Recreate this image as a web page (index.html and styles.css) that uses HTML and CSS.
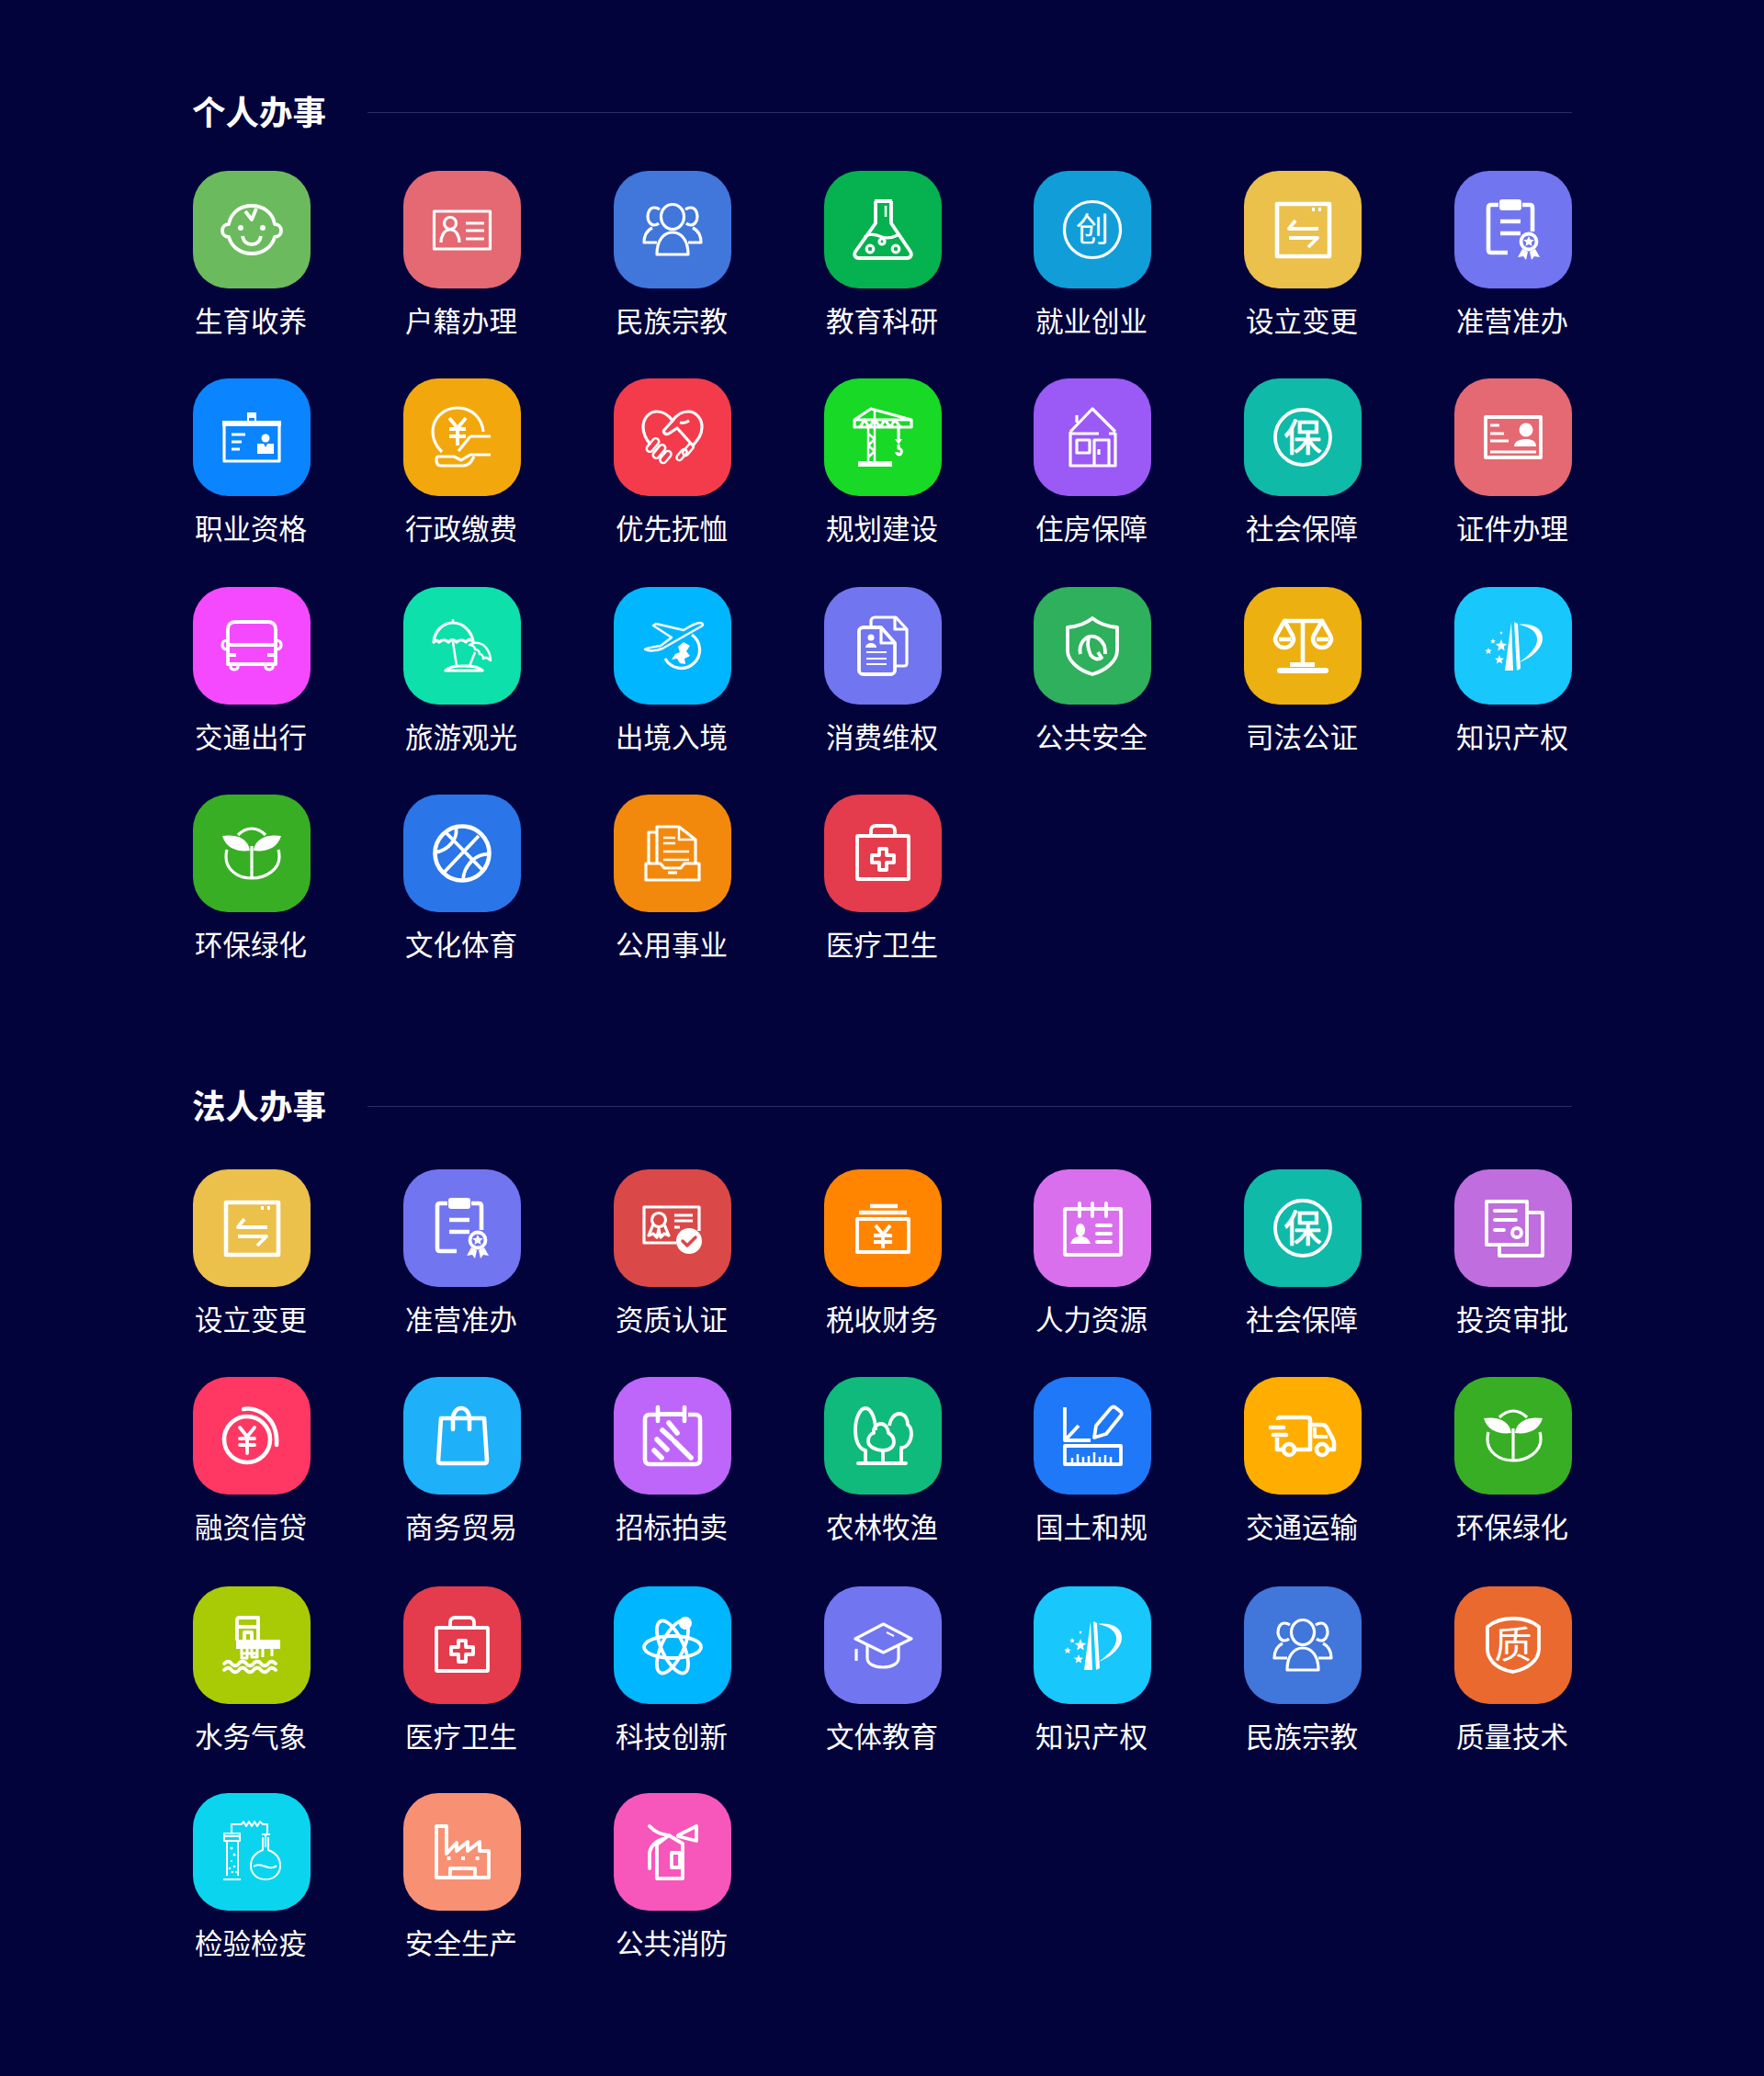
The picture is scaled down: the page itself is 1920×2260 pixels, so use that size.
FILE: index.html
```html
<!DOCTYPE html>
<html lang="zh-CN">
<head>
<meta charset="utf-8">
<title>办事分类</title>
<link rel="stylesheet" href="styles.css">
</head>
<body>
<svg class="sprite" xmlns="http://www.w3.org/2000/svg" aria-hidden="true">
<defs>
<symbol id="baby" viewBox="0 0 128 128"><path class="w4" d="M64 38c-13 0-23 8-25 20-4 0-7 3-7 7s3 7 7 7c3 11 13 18 25 18s22-7 25-18c4 0 7-3 7-7s-3-7-7-7C87 46 77 38 64 38z"/><path class="w4" d="M57 44l7 9 5-12"/><circle class="f n" cx="52" cy="62" r="3"/><circle class="f n" cx="76" cy="62" r="3"/><path class="w4" d="M54 71c1 6 5 9 10 9s9-3 10-9"/></symbol>
<symbol id="idcard" viewBox="0 0 128 128"><rect x="33.500" y="44" width="61" height="41"/><circle cx="51" cy="57" r="6.500"/><path d="M41 78c0-8 4-14 10-14s10 6 10 14"/><path d="M68 57h20M68 65h20M68 74h20"/></symbol>
<symbol id="people" viewBox="0 0 128 128"><ellipse cx="64" cy="50" rx="12.500" ry="13.500"/><path d="M47 91c0-15 7-24 17-24s17 9 17 24z"/><path d="M50 42c-2-1.500-4-2-6-2-4 0-7 4-7 9.500s3 9.500 7 9.500c2 0 4-1 5-2M78 42c2-1.500 4-2 6-2 4 0 7 4 7 9.500s-3 9.500-7 9.500c-2 0-4-1-5-2"/><path d="M42 62c-6 3-9 9-9 16h14M86 62c6 3 9 9 9 16H81"/></symbol>
<symbol id="flask" viewBox="0 0 128 128"><path class="w4" d="M55 33h19M56 33v24L34 88c-2 4 0 7 4 7h52c4 0 6-3 4-7L73 57V33"/><path d="M44 72c7-5 13-2 19 0s11 1 17-2"/><path class="w25" d="M67 38v12"/><circle cx="50" cy="85" r="3.800"/><circle cx="63" cy="77" r="3"/><circle cx="78" cy="85" r="3.800"/></symbol>
<symbol id="chuang" viewBox="0 0 128 128"><circle cx="64" cy="64" r="30.500"/><text class="t" x="64" y="77" font-size="36" text-anchor="middle">创</text></symbol>
<symbol id="change" viewBox="0 0 128 128"><rect class="w5" x="36" y="36" width="57" height="57"/><path class="w4" d="M74 42h3M81 42h3M81 63H49l7-9M49 73h31l-10 10"/></symbol>
<symbol id="permit" viewBox="0 0 128 128"><path class="w5" d="M48 37h-8c-2 0-3 1-3 3v46c0 2 1 3 3 3h18M74 37h8c2 0 3 1 3 3v26"/><rect class="f n" x="49" y="31" width="24" height="12" rx="3"/><path class="w5" d="M50 55h22M50 68h22"/><circle class="w4" cx="81" cy="77" r="8.500"/><path class="f n" d="M81 71l1.700 3.800 4.100.4-3.100 2.700.9 4-3.600-2.100-3.600 2.100.9-4-3.100-2.700 4.100-.4z"/><path class="f n" d="M74 85l-5 9 6-1 3 4 2-9zM88 85l5 9-6-1-3 4-2-9z"/></symbol>
<symbol id="badge" viewBox="0 0 128 128"><path d="M34 48h60v42H34z"/><path class="f n" d="M32 46h64v6H32zM59 37h10v13H59z"/><path class="f-bg" d="M61 43h6v3h-6z"/><path d="M42 61h15M42 69h11M42 77h9"/><circle class="f n" cx="79" cy="65" r="4.500"/><path class="f n" d="M70 71h7l2 4 2-4h7v11H70z"/></symbol>
<symbol id="yuan-hand" viewBox="0 0 128 128"><path d="M42 80c-6-6-10-14-10-22 0-15 12-26 27-26s27 11 28 26"/><path class="w4" d="M50 43l9 11 9-11M59 54v19M50 55h18M50 63h18"/><path d="M73 63h22M73 63L60 79M38 85h17l8 4v0l10-6h22M38 85c-2 0-2 2-2 4 0 3 1 6 5 6h24c4 0 7-2 9-5l3-5"/></symbol>
<symbol id="handshake" viewBox="0 0 128 128"><path d="M40 72c-5-6-8-11-8-19 0-10 7-17 15-17 7 0 12 3 17 10 5-7 10-10 17-10 8 0 15 7 15 17 0 8-4 13-9 19"/><path d="M64 46l-9 10c-2 3 2 6 5 4l9-6 18 20M72 48c4 1 7 0 10-2"/><g class="w25"><rect x="39" y="64" width="7" height="17" rx="3.500" transform="rotate(40 42.500 72.500)"/><rect x="46" y="71" width="7" height="17" rx="3.500" transform="rotate(40 49.500 79.500)"/><rect x="53" y="78" width="7" height="15" rx="3.500" transform="rotate(40 56.500 85.500)"/><rect x="78" y="70" width="6" height="15" rx="3" transform="rotate(40 81 77.500)"/><rect x="71" y="76" width="6" height="14" rx="3" transform="rotate(40 74 83)"/></g></symbol>
<symbol id="crane" viewBox="0 0 128 128"><path d="M33 45h62v8H33zM33 45l18-12 44 12M39 53l5-8 5 8 6-8 6 8 5-8 6 8 5-8 6 8"/><path class="w25" d="M48 53v38M55 35v56M48 60l7 6-7 7 7 6-7 7"/><path class="f n" d="M37 90h37v6H37z"/><path d="M81 53v14"/><path class="f n" d="M77 66h8l-4 6z"/><path d="M81 72v4c3 1 4 3 3 5-1 3-5 2-5-1"/></symbol>
<symbol id="house" viewBox="0 0 128 128"><path d="M47 48V40M40 58l24-25 25 25M40 58v37h49V59M40 60h31M82 60h7"/><rect x="47" y="67" width="14" height="14"/><path d="M66 95V67h16v28M71 77v6"/></symbol>
<symbol id="bao" viewBox="0 0 128 128"><circle cx="64" cy="64" r="30" class="w4"/><text class="t tb" x="64" y="79" font-size="41" text-anchor="middle">保</text></symbol>
<symbol id="pcard" viewBox="0 0 128 128"><rect class="w4" x="34" y="42" width="60" height="44"/><path d="M39 51h10M39 60h15M39 68h20M39 80h50"/><circle class="f n" cx="78" cy="56" r="7.500"/><path class="f n" d="M65 74c0-6 7-8 13-8s11 2 11 8z"/></symbol>
<symbol id="bus" viewBox="0 0 128 128"><path class="w4" d="M38 84V46c0-5 3-8 8-8h36c5 0 8 3 8 8v38z"/><path class="w4" d="M38 63h52M38 74h9M81 74h9"/><path d="M38 58c-4 0-6 2-6 5s2 5 6 5M90 58c4 0 6 2 6 5s-2 5-6 5"/><path d="M41 84v3c0 2 2 3 4 3s4-1 4-3v-3M79 84v3c0 2 2 3 4 3s4-1 4-3v-3"/></symbol>
<symbol id="beach" viewBox="0 0 128 128"><path d="M33 60c1-12 10-21 21-21s20 9 22 20c-3-2-6-2-8 1-3-3-7-3-10 0-3-3-6-3-9 0-3-3-7-3-10 0-2-2-4-2-6 0z" /><path class="w25" d="M54 35v4M54 60l4 26M72 63c7-4 14-2 18 3 3 4 5 9 5 14-3-3-6-4-8-2 0-3-2-5-4-5 0-3-2-5-5-5 0-3-3-5-6-5zM78 71l-6 15"/><path d="M46 91c4-4 9-5 20-5s16 1 20 5z"/></symbol>
<symbol id="plane" viewBox="0 0 128 128"><path class="w25" d="M94 39c-4 0-10 3-18 8L46 40l-3 2 20 13-12 9c-5 1-14 2-17 4 4 2 12 2 19-1l42-24c3-1 2-4-1-4z"/><path d="M56 78A20 20 0 1 0 85 52"/><path class="f n" d="M76 60l7 4-4 6 4 5-6 3 1 6-6-1-3-5-6 1 4-6 5-2-2-6z"/></symbol>
<symbol id="files" viewBox="0 0 128 128"><path d="M51 43v-6c0-2 2-4 4-4h23l12 13v37c0 2-1 3-3 3h-9"/><path d="M77 33v13h13"/><path class="w4" d="M43 44h19l15 17v30c0 2-2 4-4 4H43c-3 0-5-2-5-4V48c0-2 2-4 5-4z"/><path d="M62 45v16h15"/><circle class="f n" cx="51" cy="55" r="3.500"/><path class="f n" d="M45 66c0-3 3-5 6-5s6 2 6 5z"/><path d="M46 71h22M46 78h22M46 84h22" class="w2"/></symbol>
<symbol id="shield" viewBox="0 0 128 128"><path class="w4" d="M64 34c-7 6-17 9-27 10v25c0 12 13 22 27 26 14-4 27-14 27-26V44c-10-1-20-4-27-10z"/><path class="w4" d="M51 73c-2-8 2-16 9-19 7-2 14 3 17 10 1 3 1 6 1 9M61 53c-3 6-2 14 1 21 3 4 8 6 12 3M70 71l4 6-6 2"/></symbol>
<symbol id="scale" viewBox="0 0 128 128"><path class="w5" d="M44 37h42M64 37v48"/><path class="f n" d="M50 82h27v5H50zM39 88h50a2.500 2.500 0 0 1 0 6H39a2.500 2.500 0 0 1 0-6z"/><path class="w5" d="M44 37L35 53c-3 6 2 13 9 13s12-7 9-13zM85 37l-9 16c-3 6 2 13 9 13s12-7 9-13z"/><path class="w5" d="M38 57h13M79 57h13"/></symbol>
<symbol id="ip" viewBox="0 0 128 128"><path class="f n" d="M62 38l-7 53h9zM65 38l3 53 4-2-3-49z"/><path class="f n" d="M70 41c13-2 26 3 26 15 0 10-11 21-25 26 9-7 20-16 19-26-1-9-10-13-20-15z"/><path class="f n" d="M51 57l1.700 4.500 4.500.4-3.500 3 1.100 4.600-3.800-2.500-3.800 2.500 1.100-4.600-3.500-3 4.500-.4zM37 66l1 2.500 2.700.2-2 1.700.7 2.600-2.400-1.400-2.400 1.400.7-2.600-2-1.700 2.700-.2zM49 74l1.400 3.400 3.600.3-2.700 2.300.8 3.600-3.100-2-3.100 2 .8-3.600-2.700-2.300 3.600-.3zM42 56l.8 2 2 .2-1.500 1.300.5 2-1.800-1-1.800 1 .5-2-1.500-1.300 2-.2zM51 48l.5 1.300 1.300.1-1 .9.3 1.300-1.100-.7-1.100.7.3-1.300-1-.9 1.300-.1z"/></symbol>
<symbol id="sprout" viewBox="0 0 128 128"><path d="M49 44c5-5 10-7 15-7s10 2 15 7M37 60c-1 3-1 6-1 8 0 13 12 23 28 23s30-10 30-23c0-3 0-5-1-8M64 56v35"/><path class="f n" d="M32 45c12-2 28 1 30 16-12 2-26-2-30-16zM96 45c-12-2-28 1-30 16 12 2 26-2 30-16z"/></symbol>
<symbol id="ball" viewBox="0 0 128 128"><circle class="w5" cx="64" cy="64" r="29.500"/><path class="w4" d="M82 45L43 86M46 41l42 43M57 35c3 12-7 26-23 28M93 65c-13-1-27 11-28 28"/></symbol>
<symbol id="tray" viewBox="0 0 128 128"><path d="M47 41h-9v33M47 74V35h24l18 14v25"/><path d="M71 35v14h18M54 47h13M54 53h13M54 62h28M54 71h28" class="w25"/><path d="M35 75h16l4 5h18l4-5h16v18H35z"/><path d="M59 85h10"/></symbol>
<symbol id="medkit" viewBox="0 0 128 128"><rect class="w4" x="36" y="45" width="56" height="47" rx="1"/><path class="w4" d="M51 45v-6c0-3 2-5 5-5h16c3 0 5 2 5 5v6"/><path class="w4" d="M60 59h8v7h8v8h-8v8h-8v-8h-8v-8h8z"/></symbol>
<symbol id="cert" viewBox="0 0 128 128"><path d="M68 80H33V41h60v26"/><circle cx="49" cy="55" r="7.500"/><path d="M43 60l-5 12 5-2 4 4 2-9 2 9 4-4 5 2-5-12"/><path d="M66 50h20M66 56h20M66 63h6"/><circle class="f n" cx="82" cy="78" r="14"/><path class="ck" d="M75 78l5 5 9-9"/></symbol>
<symbol id="tax" viewBox="0 0 128 128"><path class="w5" d="M50 40h30M38 47h52"/><rect class="w4" x="36" y="54" width="56" height="36"/><path class="w4" d="M56 61l8 10 8-10M64 71v15M54 72h20M54 79h20"/></symbol>
<symbol id="hr" viewBox="0 0 128 128"><rect class="w4" x="34" y="43" width="61" height="50" rx="1"/><path class="w4 r" d="M50 37v14M64 37v14M79 37v14M69 61h15M69 70h15M69 79h15"/><ellipse class="f n" cx="51" cy="66" rx="5" ry="7"/><path class="f n" d="M40 81c2-6 6-8 11-8s9 2 11 8z"/></symbol>
<symbol id="invest" viewBox="0 0 128 128"><path class="w4" d="M35 35h44v47H35zM80 47h16v47H49V82"/><path class="w4 r" d="M44 45h23M44 55h23M44 66h10"/><circle class="w4" cx="68" cy="69" r="5"/></symbol>
<symbol id="coin" viewBox="0 0 128 128"><circle class="w5" cx="59" cy="68" r="25"/><path class="w5 r" d="M55 35c14-3 38 8 36 39"/><path class="w4 r" d="M51 55l8 10 8-10M59 65v18M51 67h16M51 74h16"/></symbol>
<symbol id="bag" viewBox="0 0 128 128"><path class="w5" d="M41 45h47l3 46c0 2-1 3-3 3H41c-2 0-3-1-3-3z"/><path class="w5 r" d="M54 57V46c0-7 4-12 9-12s9 5 9 12v11"/></symbol>
<symbol id="auction" viewBox="0 0 128 128"><path class="w5" d="M47 41h-8c-3 0-5 2-5 5v44c0 3 2 5 5 5h50c3 0 5-2 5-5V46c0-3-2-5-5-5h-8"/><path class="w5 r" d="M48 33v15M77 33v15"/><path class="f n" d="M48 38h29v5H48z"/><path class="w6 r" d="M60 50l9 11M53 58l10 9M47 68l11 11M44 80l8 8M66 70l18 18"/></symbol>
<symbol id="trees" viewBox="0 0 128 128"><path class="w4" d="M45 80C37 78 34 68 34 58c0-13 5-24 11-24s11 11 11 24"/><path class="w4" d="M71 53c1-7 5-13 11-13 6 0 9 6 9 12 3 2 4 6 4 10 0 8-5 15-11 15"/><path class="w4" d="M62 51c5 0 8 6 8 10 4 2 6 6 6 10 0 5-5 9-12 9s-16-4-16-10c0-4 2-8 6-9-1-5 3-10 8-10z"/><path class="w4 r" d="M37 94h52M45 80v14M64 80v14M84 77v17"/></symbol>
<symbol id="land" viewBox="0 0 128 128"><path class="w4" d="M34 33v36h28M36 67l13-14"/><path class="w4" d="M84 34c2-2 4-2 6 0l5 4c1 1 1 3 0 4L79 62l-13 4 2-13z"/><rect class="w4" x="34" y="75" width="61" height="20"/><path class="w25" d="M42 94v-6M48 94v-10M54 94v-7M60 94v-8M66 94v-12M72 94v-7M78 94v-9M84 94v-7"/></symbol>
<symbol id="truck" viewBox="0 0 128 128"><path class="w5" d="M37 47c0-2 1-3 3-3h29c2 0 3 1 3 3v32H56M36 66v13h6M72 52h13c2 0 4 1 5 3l6 11c1 2 2 4 2 6v7h-6"/><path class="w4" d="M77 55v10h14"/><path class="w5 r" d="M29 55h14M32 63h14"/><circle class="w5" cx="49" cy="79" r="6"/><circle class="w5" cx="85" cy="79" r="6"/></symbol>
<symbol id="water" viewBox="0 0 128 128"><path class="w4" d="M48 59V37c0-2 1-3 3-3h20v24"/><path class="w4" d="M48 44h24M56 60V50h8v10"/><path class="f n" d="M47 58h48v10H47z"/><path class="w3 b" d="M53 68v10h6V68M64 68v9h6V68M76 68v9M86 68v8M53 73h17"/><path class="w4 r" d="M34 84c3-3 6-3 8 0s6 3 8 0 6-3 8 0 6 3 8 0 6-3 8 0 6 3 8 0 5-3 8 0M34 91c3-3 6-3 8 0s6 3 8 0 6-3 8 0 6 3 8 0 6-3 8 0 6 3 8 0 5-3 8 0"/></symbol>
<symbol id="atom" viewBox="0 0 128 128"><g class="w4"><ellipse cx="64" cy="66" rx="31" ry="12"/><ellipse cx="64" cy="66" rx="31" ry="12" transform="rotate(65 64 66)"/><ellipse cx="64" cy="66" rx="31" ry="12" transform="rotate(-65 64 66)"/></g><circle class="f n" cx="78" cy="40" r="7"/></symbol>
<symbol id="grad" viewBox="0 0 128 128"><path d="M64.500 41L95 57 64.500 72 34 57z"/><path d="M47 64v14c0 6 7 10 17 10s17-4 17-10V64M35 68v13"/><path class="w2" d="M68 50l8 4"/></symbol>
<symbol id="zhi" viewBox="0 0 128 128"><path class="w4" d="M36 44c7-6 17-9 28-9s21 3 28 9v24c0 13-13 22-28 25-9-1-20-6-24-13-3-4-4-8-4-12z"/><text class="t" x="64" y="78" font-size="41" text-anchor="middle">质</text></symbol>
<symbol id="lab" viewBox="0 0 128 128"><g class="w2"><path d="M42 44V34h11l2-3 3 5 3-5 3 5 3-5 3 5 3-5 3 3h5v12"/><path d="M37 52v38M49 52v38M33 94h19M34 44h17v8H34zM34 47h17M75 45h9M79 45v14M76 48v14c-8 3-13 9-13 17 0 9 7 15 16 15s16-6 16-15c0-8-5-14-13-17V48M66 80c4-3 8-2 13 0s9 2 12-1"/></g><circle class="f n" cx="42" cy="60" r="1.500"/><circle class="f n" cx="45" cy="67" r="1.500"/><circle class="f n" cx="42" cy="74" r="1"/><circle class="f n" cx="40" cy="82" r="1.300"/><circle class="f n" cx="45" cy="80" r="1.300"/><circle class="f n" cx="43" cy="86" r="1.300"/><circle class="f n" cx="47" cy="86" r="1"/></symbol>
<symbol id="factory" viewBox="0 0 128 128"><path class="w4" d="M36 92V36h11v30l11-12v9l12-10v10l13-10v10h10v29z"/><path class="w4" d="M51 92V82h27v10"/><path class="w4 d" d="M49.500 71h.1M65 71h.1M80.500 71h.1"/></symbol>
<symbol id="fire" viewBox="0 0 128 128"><path class="w4" d="M47 56l13-10 15 9v38H47z"/><rect class="w4" x="63" y="65" width="9" height="16"/><path class="w4 r" d="M70 46l20-10v16L70 47M60 46c-6-1-14-2-21-10M53 50c-7 2-13 8-14 15v17"/></symbol>
</defs>
</svg>

<main class="page">
  <section class="block block-personal">
    <header class="block-head"><h2>个人办事</h2><span class="rule"></span></header>
    <div class="tiles">
      <a class="tile"><span class="ico tone-leaf"><svg><use href="#baby"/></svg></span><span class="name">生育收养</span></a>
      <a class="tile"><span class="ico tone-rose"><svg><use href="#idcard"/></svg></span><span class="name">户籍办理</span></a>
      <a class="tile"><span class="ico tone-blue"><svg><use href="#people"/></svg></span><span class="name">民族宗教</span></a>
      <a class="tile"><span class="ico tone-emerald"><svg><use href="#flask"/></svg></span><span class="name">教育科研</span></a>
      <a class="tile"><span class="ico tone-ocean"><svg><use href="#chuang"/></svg></span><span class="name">就业创业</span></a>
      <a class="tile"><span class="ico tone-sand"><svg><use href="#change"/></svg></span><span class="name">设立变更</span></a>
      <a class="tile"><span class="ico tone-iris"><svg><use href="#permit"/></svg></span><span class="name">准营准办</span></a>

      <a class="tile"><span class="ico tone-azure"><svg><use href="#badge"/></svg></span><span class="name">职业资格</span></a>
      <a class="tile"><span class="ico tone-amber"><svg><use href="#yuan-hand"/></svg></span><span class="name">行政缴费</span></a>
      <a class="tile"><span class="ico tone-red"><svg><use href="#handshake"/></svg></span><span class="name">优先抚恤</span></a>
      <a class="tile"><span class="ico tone-lime"><svg><use href="#crane"/></svg></span><span class="name">规划建设</span></a>
      <a class="tile"><span class="ico tone-violet"><svg><use href="#house"/></svg></span><span class="name">住房保障</span></a>
      <a class="tile"><span class="ico tone-teal"><svg><use href="#bao"/></svg></span><span class="name">社会保障</span></a>
      <a class="tile"><span class="ico tone-rose"><svg><use href="#pcard"/></svg></span><span class="name">证件办理</span></a>

      <a class="tile"><span class="ico tone-magenta"><svg><use href="#bus"/></svg></span><span class="name">交通出行</span></a>
      <a class="tile"><span class="ico tone-mint"><svg><use href="#beach"/></svg></span><span class="name">旅游观光</span></a>
      <a class="tile"><span class="ico tone-sky"><svg><use href="#plane"/></svg></span><span class="name">出境入境</span></a>
      <a class="tile"><span class="ico tone-iris"><svg><use href="#files"/></svg></span><span class="name">消费维权</span></a>
      <a class="tile"><span class="ico tone-grass"><svg><use href="#shield"/></svg></span><span class="name">公共安全</span></a>
      <a class="tile"><span class="ico tone-gold"><svg><use href="#scale"/></svg></span><span class="name">司法公证</span></a>
      <a class="tile"><span class="ico tone-cyan"><svg><use href="#ip"/></svg></span><span class="name">知识产权</span></a>

      <a class="tile"><span class="ico tone-forest"><svg><use href="#sprout"/></svg></span><span class="name">环保绿化</span></a>
      <a class="tile"><span class="ico tone-royal"><svg><use href="#ball"/></svg></span><span class="name">文化体育</span></a>
      <a class="tile"><span class="ico tone-tangerine"><svg><use href="#tray"/></svg></span><span class="name">公用事业</span></a>
      <a class="tile"><span class="ico tone-crimson"><svg><use href="#medkit"/></svg></span><span class="name">医疗卫生</span></a>
    </div>
  </section>

  <section class="block block-corporate">
    <header class="block-head"><h2>法人办事</h2><span class="rule"></span></header>
    <div class="tiles">
      <a class="tile"><span class="ico tone-sand"><svg><use href="#change"/></svg></span><span class="name">设立变更</span></a>
      <a class="tile"><span class="ico tone-iris"><svg><use href="#permit"/></svg></span><span class="name">准营准办</span></a>
      <a class="tile"><span class="ico tone-brick"><svg><use href="#cert"/></svg></span><span class="name">资质认证</span></a>
      <a class="tile"><span class="ico tone-orange"><svg><use href="#tax"/></svg></span><span class="name">税收财务</span></a>
      <a class="tile"><span class="ico tone-orchid"><svg><use href="#hr"/></svg></span><span class="name">人力资源</span></a>
      <a class="tile"><span class="ico tone-teal"><svg><use href="#bao"/></svg></span><span class="name">社会保障</span></a>
      <a class="tile"><span class="ico tone-plum"><svg><use href="#invest"/></svg></span><span class="name">投资审批</span></a>

      <a class="tile"><span class="ico tone-pink"><svg><use href="#coin"/></svg></span><span class="name">融资信贷</span></a>
      <a class="tile"><span class="ico tone-sky2"><svg><use href="#bag"/></svg></span><span class="name">商务贸易</span></a>
      <a class="tile"><span class="ico tone-lilac"><svg><use href="#auction"/></svg></span><span class="name">招标拍卖</span></a>
      <a class="tile"><span class="ico tone-jade"><svg><use href="#trees"/></svg></span><span class="name">农林牧渔</span></a>
      <a class="tile"><span class="ico tone-cobalt"><svg><use href="#land"/></svg></span><span class="name">国土和规</span></a>
      <a class="tile"><span class="ico tone-yellow"><svg><use href="#truck"/></svg></span><span class="name">交通运输</span></a>
      <a class="tile"><span class="ico tone-forest"><svg><use href="#sprout"/></svg></span><span class="name">环保绿化</span></a>

      <a class="tile"><span class="ico tone-olive"><svg><use href="#water"/></svg></span><span class="name">水务气象</span></a>
      <a class="tile"><span class="ico tone-crimson"><svg><use href="#medkit"/></svg></span><span class="name">医疗卫生</span></a>
      <a class="tile"><span class="ico tone-sky"><svg><use href="#atom"/></svg></span><span class="name">科技创新</span></a>
      <a class="tile"><span class="ico tone-iris"><svg><use href="#grad"/></svg></span><span class="name">文体教育</span></a>
      <a class="tile"><span class="ico tone-cyan"><svg><use href="#ip"/></svg></span><span class="name">知识产权</span></a>
      <a class="tile"><span class="ico tone-blue"><svg><use href="#people"/></svg></span><span class="name">民族宗教</span></a>
      <a class="tile"><span class="ico tone-rust"><svg><use href="#zhi"/></svg></span><span class="name">质量技术</span></a>

      <a class="tile"><span class="ico tone-aqua"><svg><use href="#lab"/></svg></span><span class="name">检验检疫</span></a>
      <a class="tile"><span class="ico tone-salmon"><svg><use href="#factory"/></svg></span><span class="name">安全生产</span></a>
      <a class="tile"><span class="ico tone-hot"><svg><use href="#fire"/></svg></span><span class="name">公共消防</span></a>
    </div>
  </section>
</main>
</body>
</html>
```

FILE: styles.css
```css
* { box-sizing: border-box; }
html, body { margin: 0; padding: 0; }
body {
  background: #03033b;
  color: #fff;
  font-family: "Noto Sans CJK SC", "Noto Sans", sans-serif;
  min-height: 2260px;
}
.sprite { width: 0; height: 0; position: absolute; }
.page { width: 1501px; margin-left: 210px; }
.block-personal { padding-top: 96px; }
.block-corporate { padding-top: 131px; }

.block-head { display: flex; align-items: center; height: 50px; gap: 45px; }
.block-head h2 { margin: 0 0 0 -1px; font-size: 36.500px; font-weight: 700; line-height: 50px; white-space: nowrap; }
.rule { flex: 1; height: 1px; background: #2b2b66; margin-top: 3px; }

.block-personal .block-head { margin-bottom: 40px; }
.block-corporate .block-head { margin-bottom: 45px; }

.tiles { display: grid; grid-template-columns: repeat(3, 229px) 228px repeat(2, 229px) 128px; }
.block-personal .tiles { grid-template-rows: 226px 227px 226px auto; }
.block-corporate .tiles { grid-template-rows: 226px 228px 225px auto; }

.tile { display: flex; flex-direction: column; align-items: center; width: 128px; }
.ico { display: block; width: 128px; height: 128px; border-radius: 38px; }
.ico svg { display: block; width: 128px; height: 128px; fill: none; stroke: #fff; stroke-width: 3.200; stroke-linejoin: round; }
.name { margin-top: 14px; padding-right: 2px; font-size: 30.500px; line-height: 40px; white-space: nowrap; font-weight: 400; color: #fff; }

/* icon paint helpers */
.f { fill: #fff; }
.n { stroke: none; }
.t { fill: #fff; stroke: none; font-family: "Noto Sans CJK SC", sans-serif; }
.tb { stroke: #fff; stroke-width: 0.900; }
.w2 { stroke-width: 2; }
.w25 { stroke-width: 2.500; }
.w3 { stroke-width: 3; }
.w4 { stroke-width: 3.800; }
.w5 { stroke-width: 4.600; }
.w6 { stroke-width: 5.600; }
.r { stroke-linecap: round; }
.d { stroke-linecap: square; }
.ck { stroke: #db4848; stroke-width: 3.500; fill: none; stroke-linecap: round; }
.f-bg { fill: #0a85ff; stroke: none; }

/* tile colours */
.tone-leaf { background: #6cba5e; }
.tone-rose { background: #e46972; }
.tone-blue { background: #4176db; }
.tone-emerald { background: #06b150; }
.tone-ocean { background: #119ed8; }
.tone-sand { background: #ebc04b; }
.tone-iris { background: #7175f0; }
.tone-azure { background: #0a85ff; }
.tone-amber { background: #f2a80c; }
.tone-red { background: #f43b4c; }
.tone-lime { background: #17d926; }
.tone-violet { background: #9b59f5; }
.tone-teal { background: #0fbaa8; }
.tone-magenta { background: #f549ff; }
.tone-mint { background: #0de0ab; }
.tone-sky { background: #00b6ff; }
.tone-grass { background: #2fb05c; }
.tone-gold { background: #ecb010; }
.tone-cyan { background: #18c7fb; }
.tone-forest { background: #38ae25; }
.tone-royal { background: #2a75e8; }
.tone-tangerine { background: #f3890c; }
.tone-crimson { background: #e43c4c; }
.tone-brick { background: #db4848; }
.tone-orange { background: #ff8500; }
.tone-orchid { background: #da6fee; }
.tone-plum { background: #c06ddf; }
.tone-pink { background: #fe3863; }
.tone-sky2 { background: #1fb0fa; }
.tone-lilac { background: #be66f9; }
.tone-jade { background: #0fba7c; }
.tone-cobalt { background: #1f78f7; }
.tone-yellow { background: #ffae00; }
.tone-olive { background: #a8cb05; }
.tone-rust { background: #ea692f; }
.tone-aqua { background: #0bd5ee; }
.tone-salmon { background: #f89174; }
.tone-hot { background: #f757bb; }
```
